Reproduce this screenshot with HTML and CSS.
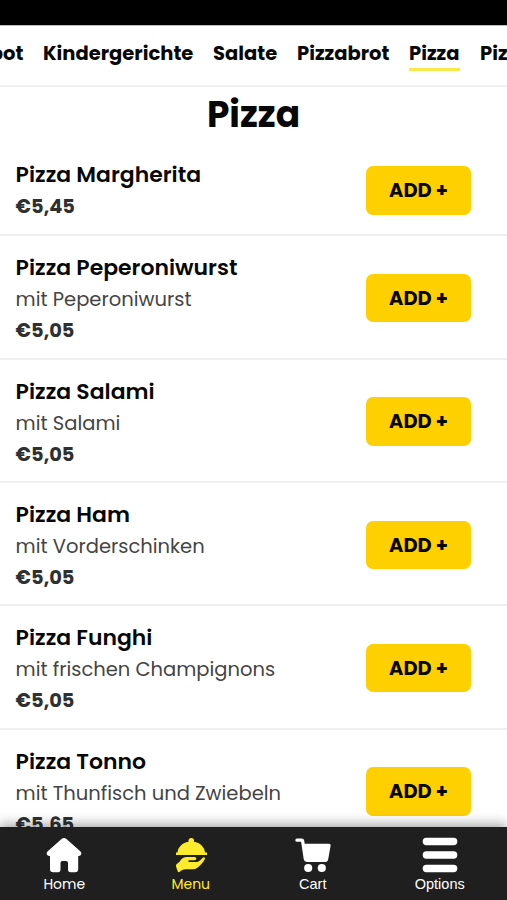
FILE: index.html
```html
<!DOCTYPE html>
<html lang="de">
<head>
<meta charset="utf-8">
<title>Pizza</title>
<link rel="stylesheet" href="styles.css">
</head>
<body>
<div class="app">
  <div class="status"></div>
  <nav class="cats">
    <a class="cat c-angebot">Angebot</a><a class="cat c-kinder">Kindergerichte</a><a class="cat c-salate">Salate</a><a class="cat c-brot">Pizzabrot</a><a class="cat c-pizza active">Pizza</a><a class="cat">Pizzabrötchen</a>
  </nav>
  <main class="menu">
    <h1>Pizza</h1>
    <section class="row first"><div><h2>Pizza Margherita</h2><b>€5,45</b></div><button>ADD +</button></section>
    <section class="row"><div><h2>Pizza Peperoniwurst</h2><p>mit Peperoniwurst</p><b>€5,05</b></div><button>ADD +</button></section>
    <section class="row"><div><h2>Pizza Salami</h2><p>mit Salami</p><b>€5,05</b></div><button>ADD +</button></section>
    <section class="row"><div><h2>Pizza Ham</h2><p>mit Vorderschinken</p><b>€5,05</b></div><button>ADD +</button></section>
    <section class="row"><div><h2>Pizza Funghi</h2><p>mit frischen Champignons</p><b>€5,05</b></div><button>ADD +</button></section>
    <section class="row"><div><h2>Pizza Tonno</h2><p>mit Thunfisch und Zwiebeln</p><b>€5,65</b></div><button>ADD +</button></section>
  </main>
  <footer class="tabs">
    <a class="tab home"><svg viewBox="0 0 36 36"><path d="M15.8 1.8Q18 0 20.2 1.8L34.5 14.5Q36 16 35 17.8Q34.2 19 32.2 19V32Q32.2 35.3 29 35.3H24.5Q22 35.3 22 32.5V26Q22 24 20 24H16.5Q14.5 24 14.5 26V32.5Q14.5 35.3 12 35.3H7.2Q4 35.3 4 32V19Q1.8 19 1 17.8Q0 16 1.5 14.5Z"/></svg><span>Home</span></a>
    <a class="tab dish active"><svg viewBox="0 0 36 36"><path d="M4.500 15.500C5 9.800 9.500 5.700 15.600 4.700C15 2.500 16.500 1 18.300 1S21.600 2.500 21 4.700C27.100 5.700 31.500 9.800 32.100 15.500H34V17.900H3V15.500Z"/><path d="M3.500 27.300L6.500 24.800C8.500 21.500 11 20.100 14 20.100H21.500C23.800 20.100 24 23.300 21.500 23.300H15.500V24.900H23C25 24.900 26 24.200 27 23.400L30 20.400C31.500 19.700 32.500 21 31.800 22.300C29.500 26 27 29 24 31Q22 32.300 20 32.300H12.500C10 32.300 8.500 33.300 6.500 35Q5.300 35.700 4.700 34.300L3 29.500Q2.700 28 3.500 27.300Z"/></svg><span>Menu</span></a>
    <a class="tab cart"><svg viewBox="0 0 36 36"><path d="M2 1.500H6.800Q8.800 1.500 9.200 3.500L9.700 6.700H34Q36 6.700 35.600 8.700L33.200 22.200Q32.700 25 30 25H12.500Q9.200 25 8.700 22L6.100 4.800H2Q.300 4.800 .300 3.200T2 1.500Z"/><circle cx="13.200" cy="31" r="4.100"/><circle cx="26.800" cy="31" r="4.100"/></svg><span>Cart</span></a>
    <a class="tab options"><svg viewBox="0 0 36 36"><rect x=".7" y=".8" width="34.600" height="7.400" rx="3.700"/><rect x=".7" y="14.300" width="34.600" height="7.400" rx="3.700"/><rect x=".7" y="27.800" width="34.600" height="7.400" rx="3.700"/></svg><span>Options</span></a>
  </footer>
</div>
</body>
</html>
```
FILE: styles.css
```css
* { box-sizing: border-box; margin: 0; padding: 0; }
body { background: #fff; color: #080808; font-family: Poppins, Inter, sans-serif; overflow: hidden; }
.app { height: 900px; display: flex; flex-direction: column; overflow: hidden; }
.status { height: 25px; background: #000; flex: none; }
.cats { height: 62px; flex: none; display: flex; gap: 20px; padding-top: 14px; border-bottom: 2px solid #f0f0f0; border-top: 1px solid #bbb; overflow: hidden; }
.cat { flex: none; height: 31px; line-height: 28px; font-size: 19.500px; font-weight: 700; white-space: nowrap; }
.cat.active { border-bottom: 3px solid #fbe94b; }
.c-angebot { width: 86px; margin-left: -63px; text-align: right; }
.c-kinder { width: 150px; }
.c-salate { width: 64px; }
.c-brot { width: 92px; }
.c-pizza { width: 51px; }
.menu { flex: 1; min-height: 0; overflow: hidden; }
h1 { height: 56px; line-height: 55px; font-size: 36px; font-weight: 700; text-align: center; }
.row { height: 123.330px; padding: 15px 36px 0 15.600px; border-bottom: 2px solid #f0f0f0; display: flex; justify-content: space-between; }
.row.first { height: 93.200px; }
h2 { font-size: 21.950px; line-height: 33px; font-weight: 600; white-space: nowrap; }
p { font-size: 19.500px; line-height: 32px; font-weight: 400; color: #444; white-space: nowrap; }
b { display: block; font-size: 19.400px; line-height: 30px; font-weight: 700; color: #303030; }
.first b { line-height: 32px; }
button { width: 105px; height: 48.500px; margin-top: 22.700px; border: 0; border-radius: 7px; background: #ffd000; color: #080808; font: 700 19.400px/48px Poppins, Inter, sans-serif; padding-top: 1px; }
.first button { margin-top: 8px; }
.tabs { position: relative; height: 73px; flex: none; display: flex; justify-content: space-around; background: #1f1f1f; box-shadow: 0 -2px 12px rgba(0,0,0,.4); padding-top: 10px; color: #fff; }
.tab { display: flex; flex-direction: column; align-items: center; font-size: 14px; line-height: 22px; }
.tab svg { width: 36px; height: 36px; fill: currentColor; flex: none; }
.tab.active { color: #ffeb2d; }
.home { width: 44px; } .dish { width: 40px; } .cart { width: 35px; } .options { width: 50px; }
.cart, .options { font-family: "Liberation Sans", sans-serif; font-size: 14.500px; }
```
